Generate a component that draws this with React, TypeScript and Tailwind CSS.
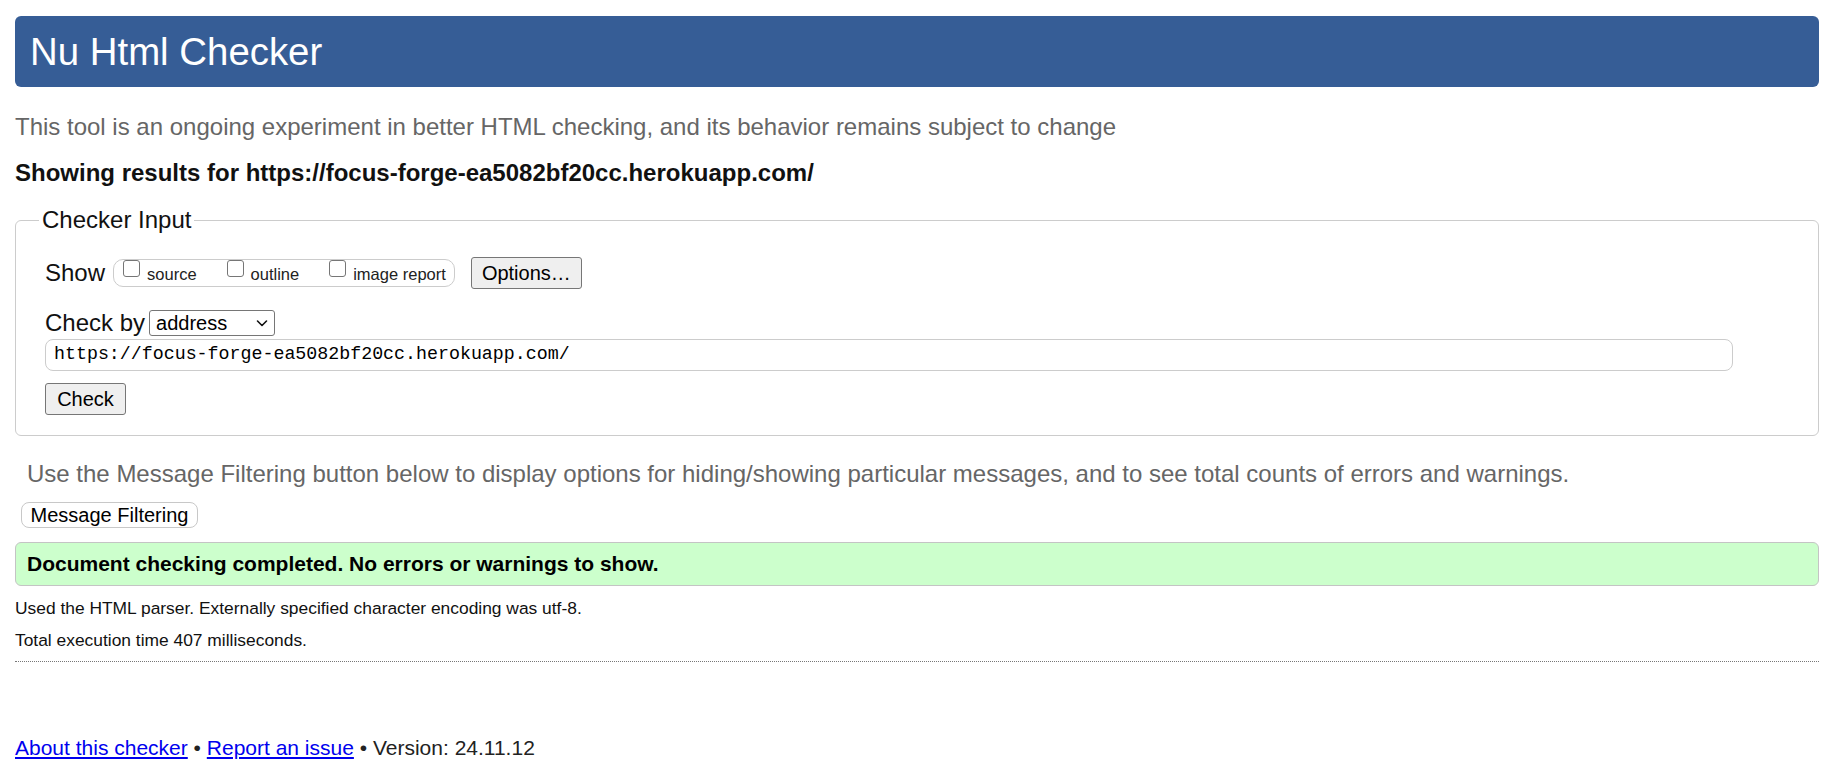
import React from 'react';

const SANS = "font-['Liberation_Sans',Arial,Helvetica,sans-serif]";

// Square checkbox drawn like the browser default
function CheckItem({ label }: { label: string }) {
  return (
    <span className="flex items-center">
      <span className="mb-[8px] h-[17px] w-[17px] rounded-[3px] border border-[#767676] bg-white" />
      <span className="ml-[7px] mt-[3px] text-[16.5px] leading-[20px] text-[#222]">{label}</span>
    </span>
  );
}

export default function App() {
  return (
    <div className={`${SANS} min-h-screen bg-white text-black`}>
      <div className="pl-[15px] pr-[29px] pt-[16px]">
        {/* Title bar */}
        <h1 className="flex h-[71px] items-center rounded-[6px] bg-[#365d96] pl-[15px] text-[38.4px] font-normal text-white">
          Nu Html Checker
        </h1>

        <p className="mt-[26px] text-[24px] leading-[28px] text-[#666]">
          This tool is an ongoing experiment in better HTML checking, and its behavior remains subject to change
        </p>

        <p className="mt-[18px] text-[24px] font-bold leading-[28px] text-[#111]">
          Showing results for https://focus-forge-ea5082bf20cc.herokuapp.com/
        </p>

        {/* Checker input */}
        <fieldset className="mt-[19px] rounded-[6px] border border-[#ccc] pb-[20px] pl-[29px] pr-[85px] pt-[23px]">
          <legend className="-ml-[6px] px-[3px] text-[24px] leading-[28px] text-[#111]">Checker Input</legend>

          <div className="flex h-[31px] items-center">
            <span className="text-[24px] leading-[28px] text-[#111]">Show</span>
            <div className="ml-[8px] flex h-[28px] items-center gap-[30px] rounded-[10px] border border-[#ccc] pl-[9px] pr-[8px]">
              <CheckItem label="source" />
              <CheckItem label="outline" />
              <CheckItem label="image report" />
            </div>
            <button className="ml-[16px] h-[32px] w-[111px] rounded-[3px] border border-[#767676] bg-[#efefef] text-[20px] leading-[24px] text-black">
              Options…
            </button>
          </div>

          <div className="mt-[22px] flex h-[26px] items-center">
            <span className="text-[24px] leading-[28px] text-[#111]">Check by</span>
            <div className="ml-[4px] flex h-[26px] w-[126px] items-center justify-between rounded-[3px] border border-[#767676] bg-white pl-[6px] pr-[5px]">
              <span className="text-[20px] leading-[24px] text-black">address</span>
              <svg width="14" height="14" viewBox="0 0 14 14" fill="none" aria-hidden="true">
                <path d="M2.5 5l4.5 4.5L11.5 5" stroke="#111" strokeWidth="1.6" strokeLinecap="round" strokeLinejoin="round" />
              </svg>
            </div>
          </div>

          <div className="mt-[3px] flex h-[32px] items-center rounded-[8px] border border-[#ccc] pl-[8px] font-['Liberation_Mono','DejaVu_Sans_Mono',monospace] text-[18.3px] text-black">
            https://focus-forge-ea5082bf20cc.herokuapp.com/
          </div>

          <button className="mt-[12px] h-[32px] w-[81px] rounded-[3px] border border-[#767676] bg-[#efefef] text-[20px] leading-[24px] text-black">
            Check
          </button>
        </fieldset>

        <p className="mt-[24px] pl-[12px] text-[24px] leading-[28px] text-[#666]">
          Use the Message Filtering button below to display options for hiding/showing particular messages, and to see total counts of errors and warnings.
        </p>

        <button className="ml-[6px] mt-[14px] h-[26px] w-[177px] rounded-[8px] border border-[#c8c8c8] bg-white text-[20px] leading-[24px] text-black">
          Message Filtering
        </button>

        {/* Result */}
        <div className="mt-[13px] flex h-[44px] items-center rounded-[6px] border border-[#c4c4c4] bg-[#ccffcc] pl-[11px] text-[21px] font-bold text-black">
          Document checking completed. No errors or warnings to show.
        </div>

        <p className="mt-[11px] text-[17.4px] leading-[22px] text-[#111]">
          Used the HTML parser. Externally specified character encoding was utf-8.
        </p>
        <p className="mt-[10px] text-[17.4px] leading-[22px] text-[#111]">Total execution time 407 milliseconds.</p>

        <hr className="mt-[10px] border-0 border-t border-dotted border-[#777]" />

        <p className="mt-[74px] pb-[15px] text-[21px] leading-[24px] text-[#222]">
          <a href="#" className="text-[#0000ee] underline">About this checker</a>
          {' • '}
          <a href="#" className="text-[#0000ee] underline">Report an issue</a>
          {' • Version: 24.11.12'}
        </p>
      </div>
    </div>
  );
}
